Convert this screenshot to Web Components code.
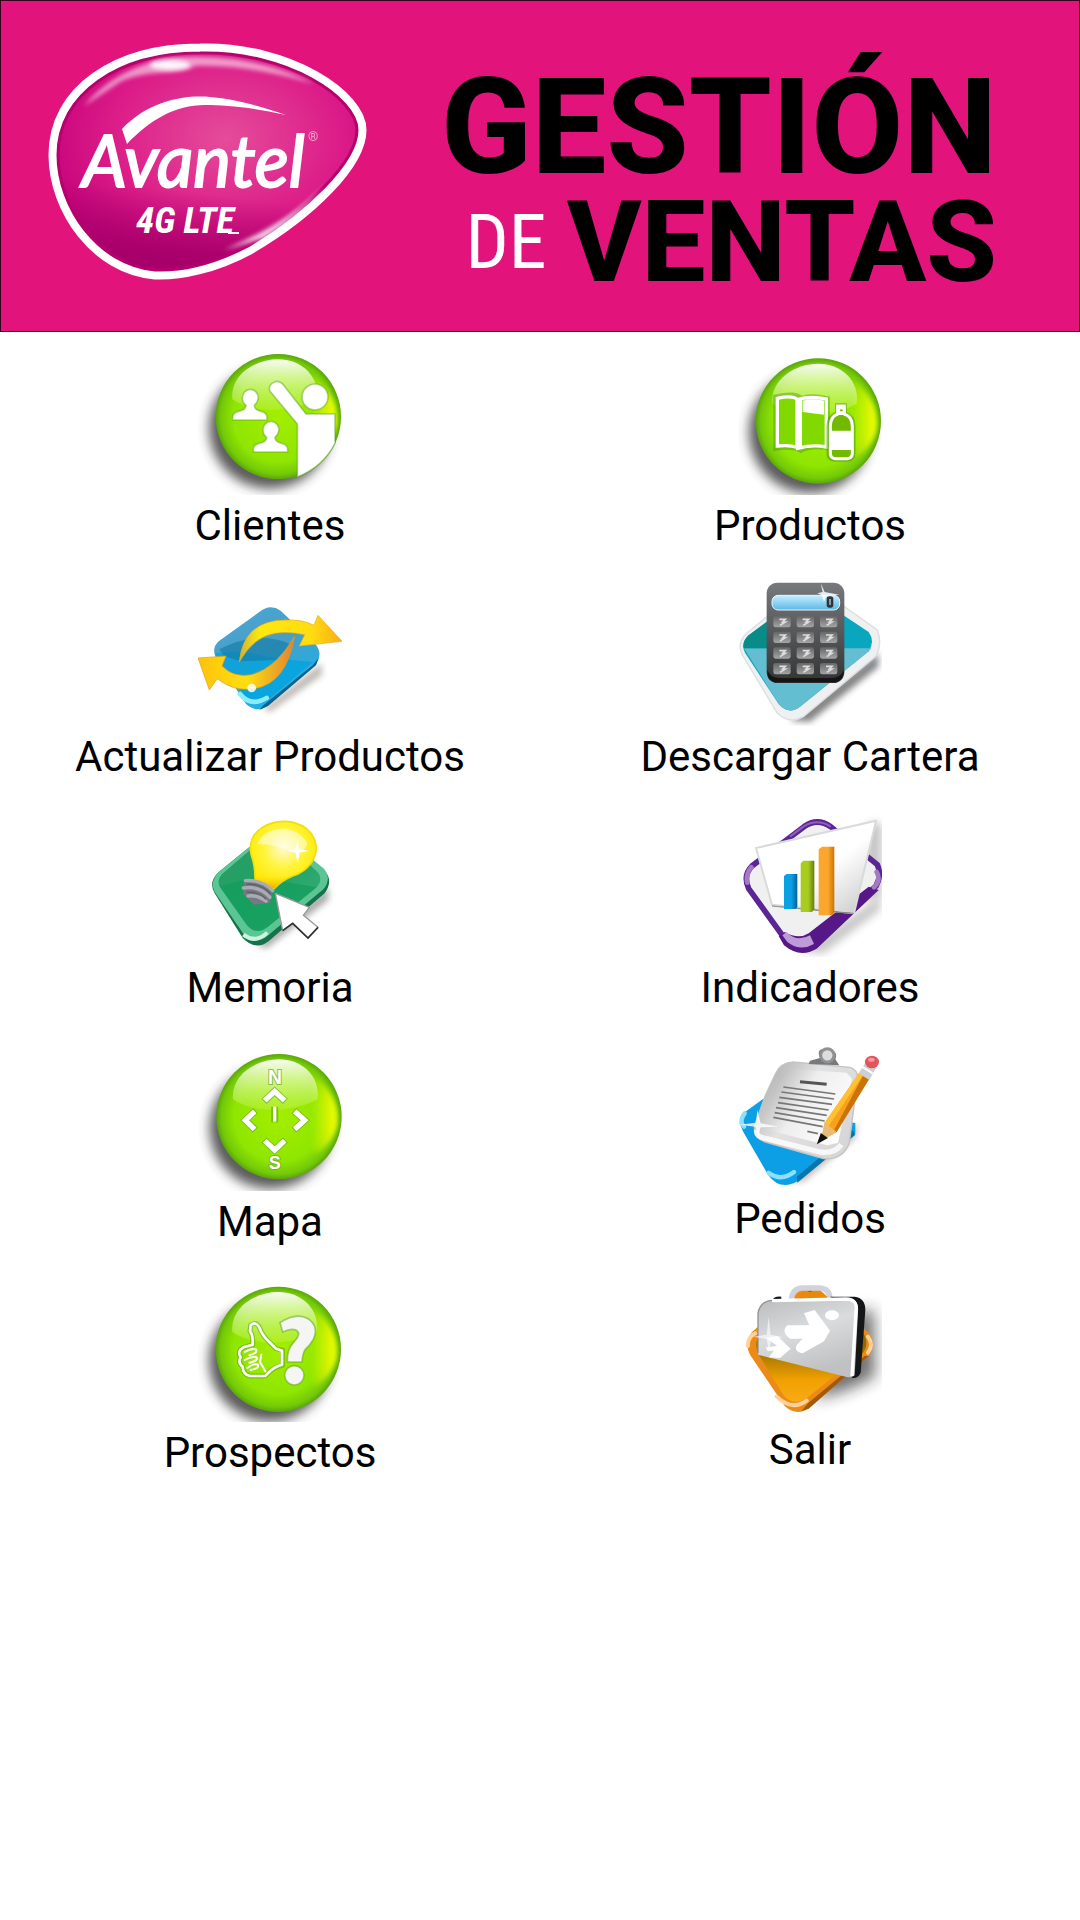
<!DOCTYPE html>
<html lang="es">
<head>
<meta charset="utf-8">
<meta name="viewport" content="width=device-width, initial-scale=1">
<title>Gestión de Ventas</title>
<style>
    body {
        margin: 0;
        background: #fff;
        color: #000;
        font-family: Roboto, "Liberation Sans", sans-serif;
    }
</style>
</head>
<body>

<app-header>
    <brand-logo slot="logo"></brand-logo>
    Gestión
    <span slot="small">de</span>
    <span slot="second">Ventas</span>
</app-header>

<main-menu>
    <menu-item icon="clientes">Clientes</menu-item>
    <menu-item icon="productos">Productos</menu-item>
    <menu-item icon="actualizar">Actualizar Productos</menu-item>
    <menu-item icon="cartera">Descargar Cartera</menu-item>
    <menu-item icon="memoria">Memoria</menu-item>
    <menu-item icon="indicadores">Indicadores</menu-item>
    <menu-item icon="mapa">Mapa</menu-item>
    <menu-item icon="pedidos">Pedidos</menu-item>
    <menu-item icon="prospectos">Prospectos</menu-item>
    <menu-item icon="salir">Salir</menu-item>
</main-menu>

<script>
// green glass ball shared by several icons
const ball = (cx, cy) => `
    <defs>
        <radialGradient id="ball" cx=".5" cy=".5" r=".5">
            <stop offset="0" stop-color="#a4ee00"/>
            <stop offset=".72" stop-color="#8fe600"/>
            <stop offset=".92" stop-color="#74c908"/>
            <stop offset="1" stop-color="#5aa50c"/>
        </radialGradient>
        <linearGradient id="shine" x1="0" y1="0" x2="0" y2="1">
            <stop offset="0" stop-color="#fff" stop-opacity=".95"/>
            <stop offset="1" stop-color="#d6f77a" stop-opacity=".25"/>
        </linearGradient>
        <linearGradient id="glow" x1="0" y1="0" x2="1" y2="0">
            <stop offset=".1" stop-color="#e6fa00" stop-opacity="0"/>
            <stop offset=".8" stop-color="#e6fa00"/>
        </linearGradient>
        <filter id="soft" x="-30%" y="-30%" width="160%" height="160%"><feGaussianBlur stdDeviation="17"/></filter>
        <filter id="edge" x="-30%" y="-30%" width="160%" height="160%"><feGaussianBlur stdDeviation="6"/></filter>
    </defs>
    <circle cx="${cx - 26}" cy="${cy + 34}" r="182" fill="#333" opacity=".8" filter="url(#soft)"/>
    <circle cx="${cx}" cy="${cy}" r="188" fill="url(#ball)"/>
    <path d="M${cx + 90} ${cy - 138}Q${cx + 190} ${cy - 60} ${cx + 174} ${cy + 30}Q${cx + 150} ${cy + 100} ${cx + 90} ${cy + 120}Z" fill="url(#glow)" filter="url(#edge)"/>
    <path d="M${cx - 138} ${cy - 52}C${cx - 145} ${cy - 125} ${cx - 70} ${cy - 172} ${cx} ${cy - 172}C${cx + 70} ${cy - 172} ${cx + 125} ${cy - 120} ${cx + 115} ${cy - 52}C${cx + 60} ${cy - 20} ${cx - 60} ${cy} ${cx - 138} ${cy - 52}Z" fill="url(#shine)"/>
`;

const bust = (x, y) => `<path d="M${x - 22} ${y - 16}a24 26 0 1 1 48 0q-2 14-12 22q0 14 20 18q18 4 18 18v8h-103v-8q0-14 18-18q22-4 22-18q-11-8-11-22Z"/>`;

const keys = () => {
    let out = '';
    for (let row = 0; row < 4; row++) {
        for (let col = 0; col < 3; col++) {
            const x = 220 + col * 70;
            const y = 138 + row * 47;
            out += `<rect x="${x}" y="${y}" width="52" height="34" rx="7" fill="url(#key)"/>`;
            out += `<path d="M${x + 18} ${y + 10}h18l-8 8h8l-16 10" fill="none" stroke="#ddd" stroke-width="5"/>`;
        }
    }
    return out;
};

const icons = {
    clientes: {
        box: '54 33 432 432',
        art: `${ball(295, 230)}
            <g fill="#fff" stroke="#579d16" stroke-opacity=".45" stroke-width="5">
                ${bust(209, 190)}
                ${bust(271, 286)}
                <circle cx="405" cy="171" r="39"/>
                <path d="M276 130q18-14 34 4L378 222H465V310Q430 380 352 411V252L270 154q-6-14 6-24Z"/>
            </g>`
    },
    productos: {
        box: '114 33 432 432',
        art: `${ball(355, 243)}
            <path d="M228 172q60-14 75 5q30-12 78 0v145q-45-8-78 8q-25-14-75-6Z" fill="none" stroke="#579d16" stroke-opacity=".5" stroke-width="17"/>
            <path d="M232 175q45-10 61 4v143q-25-8-61-4ZM293 179q35-12 86-2v144q-40-8-86 4Z" fill="#82d900" stroke="#fff" stroke-width="10"/>
            <path d="M286 175h20v150h-20ZM308 182q30-8 64 0v42l-64-8Z" fill="#fff"/>
            <path d="M414 198h18v24q26 8 26 36v82q0 16-16 17h-38q-16-1-16-17v-82q0-28 26-36Z" fill="#72b900" stroke="#579d16" stroke-opacity=".6" stroke-width="17"/>
            <path d="M413 198h20v24q24 8 24 36v82q0 14-14 16h-38q-14-2-14-16v-82q0-28 22-36Z" fill="#72b900" stroke="#fff" stroke-width="9"/>
            <path d="M393 272h60v58h-60ZM409 200h27v25h-27Z" fill="#fff"/>
            <path d="M420 211h8" stroke="#72b900" stroke-width="5"/>`
    },
    actualizar: {
        box: '54 36 432 432',
        art: `
            <defs>
                <linearGradient id="tile" x1="0" y1="0" x2=".6" y2="1"><stop offset="0" stop-color="#45aadd"/><stop offset=".5" stop-color="#4b9dc2"/><stop offset="1" stop-color="#17b3ee"/></linearGradient>
                <linearGradient id="up" x1="0" y1="0" x2="1" y2="0"><stop offset="0" stop-color="#c9b33a"/><stop offset=".2" stop-color="#ffe80e"/><stop offset=".7" stop-color="#ffdc12"/><stop offset="1" stop-color="#fbab11"/></linearGradient>
                <linearGradient id="down" x1="0" y1="0" x2="1" y2="0"><stop offset="0" stop-color="#ffc20c"/><stop offset=".5" stop-color="#ffdf10"/><stop offset="1" stop-color="#df8333"/></linearGradient>
                <filter id="soft" x="-30%" y="-30%" width="160%" height="160%"><feGaussianBlur stdDeviation="9"/></filter>
            </defs>
            <path d="M250 415L425 280L425 315L270 425Z" fill="#432" opacity=".35" filter="url(#soft)"/>
            <path d="M238 126Q270 100 302 122L406 222Q430 252 408 282L264 406Q232 432 198 402L110 268Q92 236 116 214Z" fill="url(#tile)"/>
            <path d="M416 264L408 286L264 408L238 420L250 406L398 286Z" fill="#08638f"/>
            <path d="M104 250Q180 240 224 252T398 276L260 394Q226 416 198 384Z" fill="#00a3df" opacity=".75"/>
            <path d="M118 238Q230 180 330 222L290 270L180 274L132 258Z" fill="#147ca8" opacity=".65"/>
            <path d="M180 372Q212 412 260 384" fill="none" stroke="#8bebff" stroke-width="14" stroke-linecap="round"/>
            <path d="M178 276Q190 150 318 150Q370 148 402 166L414 136L486 214L358 228L374 194Q324 184 286 190Q220 200 178 276Z" fill="url(#up)" stroke="#e8ab1c" stroke-width="2"/>
            <path d="M344 198Q320 340 224 356Q160 366 112 326L88 360L54 264L138 258L126 288Q160 324 214 314Q290 294 344 198Z" fill="url(#down)" stroke="#e39c1b" stroke-width="2"/>
            <circle cx="215" cy="354" r="13" fill="#fff" opacity=".85"/>`
    },
    cartera: {
        box: '114 36 432 432',
        art: `
            <defs>
                <linearGradient id="body" x1="0" y1="0" x2="0" y2="1"><stop offset="0" stop-color="#77797c"/><stop offset=".5" stop-color="#55575a"/><stop offset="1" stop-color="#333"/></linearGradient>
                <linearGradient id="key" x1="0" y1="0" x2="0" y2="1"><stop offset="0" stop-color="#666"/><stop offset="1" stop-color="#a5a5a5"/></linearGradient>
                <linearGradient id="screen" x1="0" y1="0" x2="0" y2="1"><stop offset="0" stop-color="#c9edff"/><stop offset="1" stop-color="#59b9e6"/></linearGradient>
                <filter id="soft" x="-30%" y="-30%" width="160%" height="160%"><feGaussianBlur stdDeviation="9"/></filter>
            </defs>
            <path d="M270 452L535 250V290L330 455Z" fill="#333" opacity=".6" filter="url(#soft)"/>
            <path d="M310 50Q335 40 360 58L532 180Q548 220 528 258L310 440Q270 464 232 430L128 256Q108 220 140 190Z" fill="#eef0f2" stroke="#dcdfe1" stroke-width="4"/>
            <path d="M310 78L340 76L506 186Q526 214 506 244L300 410Q266 436 236 402L136 250Q120 222 146 196Z" fill="#0aa6bd"/>
            <path d="M132 235H514L506 244L300 410Q266 436 236 402Z" fill="#62bed0"/>
            <path d="M220 140L146 196Q126 214 131 235H220Z" fill="#078c88"/>
            <rect x="200" y="38" width="233" height="301" rx="32" fill="url(#body)"/>
            <path d="M202 300Q200 337 232 337H400Q430 337 432 300Q420 324 396 324H236Q210 322 202 300Z" fill="#151515"/>
            <rect x="216" y="76" width="203" height="44" rx="18" fill="url(#screen)" stroke="#e6f7ff" stroke-width="3"/>
            <rect x="384" y="83" width="12" height="26" rx="4" fill="none" stroke="#333" stroke-width="8"/>
            <path d="M362 40L374 66L418 74L378 78L372 96L366 76L352 70L368 66Z" fill="#fff" opacity=".85"/>
            ${keys()}`
    },
    memoria: {
        box: '54 39 432 432',
        art: `
            <defs>
                <linearGradient id="tile" x1="0" y1="0" x2="1" y2="1"><stop offset="0" stop-color="#2a9a60"/><stop offset=".5" stop-color="#22a468"/><stop offset="1" stop-color="#3fae78"/></linearGradient>
                <radialGradient id="bulb" cx=".5" cy=".4" r=".6"><stop offset="0" stop-color="#fffbd0"/><stop offset=".5" stop-color="#fff43a"/><stop offset="1" stop-color="#ffe800"/></radialGradient>
                <linearGradient id="neck" x1="0" y1="0" x2="0" y2="1"><stop offset=".6" stop-color="#ffd400" stop-opacity="0"/><stop offset="1" stop-color="#f2a900"/></linearGradient>
                <filter id="soft" x="-30%" y="-30%" width="160%" height="160%"><feGaussianBlur stdDeviation="10"/></filter>
            </defs>
            <path d="M230 436L445 260V300L260 445Z" fill="#444" opacity=".45" filter="url(#soft)"/>
            <path d="M244 112Q280 90 320 114L432 210Q462 242 434 280L270 420Q230 456 188 414L104 280Q84 246 116 216Z" fill="#15724a"/>
            <path d="M244 112Q280 90 320 114L432 206Q456 236 430 268L262 408Q226 436 192 404L104 276Q88 246 116 216Z" fill="#5cc594"/>
            <path d="M246 120Q280 104 314 124L410 214Q432 236 410 262L264 380Q228 408 200 374L124 268Q106 244 126 222Z" fill="url(#tile)"/>
            <path d="M120 258L230 230L410 262L264 380Q228 408 200 374Z" fill="#0f9c5a" opacity=".65"/>
            <path d="M190 404Q226 432 262 398" fill="none" stroke="#c9f4df" stroke-width="12"/>
            <path d="M225 238Q226 200 214 166C196 88 280 52 342 68C406 86 424 144 394 188Q374 216 338 228Q304 242 282 266Z" fill="url(#bulb)" stroke="#f0df10" stroke-width="5"/>
            <path d="M225 238Q226 200 214 166H394Q374 216 338 228Q304 242 282 266Z" fill="url(#neck)"/>
            <path d="M232 132Q250 88 310 86Q360 90 382 130Q376 160 342 158Q290 132 232 132Z" fill="#fff" opacity=".5"/>
            <path d="M352 122L358 148L388 152L359 158L353 190L346 158L318 152L346 148Z" fill="#fff"/>
            <path d="M194 244Q242 244 278 272L270 308L222 314L190 282Z" fill="#777982"/>
            <path d="M196 242Q244 238 278 272M190 264Q238 256 270 292M204 288Q234 284 258 304" fill="none" stroke="#a9abb3" stroke-width="10" stroke-linecap="round"/>
            <path d="M199 253Q244 250 272 282M200 277Q238 274 258 298" fill="none" stroke="#5e6069" stroke-width="4"/>
            <path d="M286 280L308 392L338 370L384 414L414 382L370 346L388 322Z" fill="#fff" stroke="#999" stroke-width="4" stroke-linejoin="round"/>
            <path d="M308 392L338 370L384 414L414 382" fill="none" stroke="#333" stroke-width="5"/>`
    },
    indicadores: {
        box: '114 39 432 432',
        art: `
            <defs>
                <linearGradient id="paper" x1="0" y1="0" x2="1" y2="1"><stop offset=".55" stop-color="#fff"/><stop offset="1" stop-color="#c4c4c4"/></linearGradient>
                <linearGradient id="blue" x1="0" y1="0" x2="1" y2="0"><stop offset=".55" stop-color="#0b9fe3"/><stop offset="1" stop-color="#005f9d"/></linearGradient>
                <linearGradient id="green" x1="0" y1="0" x2="1" y2="0"><stop offset=".55" stop-color="#a9cc20"/><stop offset="1" stop-color="#627e0d"/></linearGradient>
                <linearGradient id="orange" x1="0" y1="0" x2="1" y2="0"><stop offset=".6" stop-color="#fba62c"/><stop offset="1" stop-color="#cd7207"/></linearGradient>
                <filter id="soft" x="-30%" y="-30%" width="160%" height="160%"><feGaussianBlur stdDeviation="12"/></filter>
            </defs>
            <path d="M300 455L540 290V330L370 460ZM500 70L545 70V290L490 300Z" fill="#444" opacity=".3" filter="url(#soft)"/>
            <path d="M312 80Q352 52 392 80L532 194Q546 226 528 258L340 430Q300 460 260 424L146 266Q128 226 156 198Z" fill="#f0f0f1" stroke="#5c2596" stroke-width="17"/>
            <path d="M270 110L310 80Q352 54 392 80" fill="none" stroke="#8a62b6" stroke-width="6"/>
            <path d="M536 270L350 446Q300 476 252 436L236 408L254 396Q296 420 326 400L506 260Z" fill="#561787"/>
            <path d="M247 406L262 426Q300 456 342 432L330 406Q290 428 260 396Z" fill="#bd9bd8"/>
            <path d="M142 248Q136 224 154 202M530 216Q544 240 522 262" fill="none" stroke="#a679c5" stroke-width="14" stroke-linecap="round"/>
            <path d="M168 144L528 62L462 340L216 314Z" fill="url(#paper)" stroke="#dadada" stroke-width="6" stroke-linejoin="round"/>
            <path d="M216 318L462 340L430 338Z" stroke="#888" stroke-width="2"/>
            <path d="M252 228L260 222H292V322L286 327H252Z" fill="url(#blue)"/>
            <path d="M302 190L310 182H343V328L336 336H302Z" fill="url(#green)"/>
            <path d="M356 148L366 140H403V338L396 346H356Z" fill="url(#orange)"/>`
    },
    mapa: {
        box: '54 42 432 441',
        height: 147,
        art: `${ball(297, 260)}
            <g fill="none" stroke-linecap="butt">
                <g stroke="#4e9411" stroke-opacity=".5" stroke-width="21">
                    <path d="M252 214L284 184L316 214M226 242L196 271L226 300M342 242L374 271L342 300M252 330L284 360L316 330M284 230V277"/>
                </g>
                <g stroke="#fff" stroke-width="16">
                    <path d="M254 212L284 184L314 212M224 244L196 271L224 298M344 244L374 271L344 298M254 332L284 360L314 332"/>
                    <path d="M284 230V275" stroke-width="10"/>
                </g>
            </g>
            <g fill="#fff" stroke="#6aa52c" stroke-opacity=".7" stroke-width="6" paint-order="stroke" font-family="Liberation Sans, sans-serif" font-weight="700" font-size="58" text-anchor="middle">
                <text x="285" y="162">N</text>
                <text x="284" y="418" font-size="54">S</text>
            </g>`
    },
    pedidos: {
        box: '114 42 432 432',
        art: `
            <defs>
                <linearGradient id="board" x1="0" y1=".2" x2="1" y2=".8"><stop offset="0" stop-color="#aaa"/><stop offset=".4" stop-color="#e2e2e2"/><stop offset="1" stop-color="#d5d5d5"/></linearGradient>
                <linearGradient id="page" x1="0" y1=".2" x2="1" y2=".7"><stop offset="0" stop-color="#aaa"/><stop offset=".45" stop-color="#eee"/><stop offset="1" stop-color="#fff"/></linearGradient>
                <filter id="soft" x="-30%" y="-30%" width="160%" height="160%"><feGaussianBlur stdDeviation="10"/></filter>
            </defs>
            <path d="M260 455L475 280L465 325L310 455Z" fill="#543" opacity=".35" filter="url(#soft)"/>
            <path d="M190 206L132 248Q112 276 130 306L204 434Q240 484 292 454L466 310V280Z" fill="#0c9fe6"/>
            <path d="M292 458L466 314L458 300L290 440Z" fill="#0875ad"/>
            <path d="M132 290Q116 276 134 250M206 428Q244 456 282 426" fill="none" stroke="#8bdfff" stroke-width="13" stroke-linecap="round"/>
            <path d="M226 132Q240 98 280 96L450 112Q478 122 472 152L448 338Q430 390 370 386L196 336Q158 322 164 286L196 196Z" fill="url(#board)" stroke="#c4c4c4" stroke-width="4"/>
            <path d="M170 300Q166 322 200 326L360 366Q404 372 424 344" fill="none" stroke="#fff" stroke-width="16" opacity=".8"/>
            <path d="M238 144L264 116L440 128L456 146L414 338L382 346L190 296L180 276Z" fill="url(#page)"/>
            <path d="M326 102L330 92L360 84Q346 52 384 58Q416 62 406 88L418 106Z" fill="#77797b"/>
            <circle cx="382" cy="76" r="20" fill="#ddd" stroke="#8f9193" stroke-width="9"/>
            <path d="M300 155L380 163" stroke="#555" stroke-width="9"/>
            <path d="M250 171L406 192M244 186L402 207M238 202L396 223M234 218L386 240M228 233L380 256M224 248L374 273M220 262L368 290M322 304L354 311" stroke="#777" stroke-width="5"/>
            <path d="M118 284L168 278L172 240L182 280L236 290L182 292L174 318L166 290Z" fill="#fff" opacity=".8"/>
            <path d="M478 128L508 146L410 306L362 334L374 278Z" fill="#f7a11d"/>
            <path d="M492 132L508 146L410 306L398 308Z" fill="#c9730a"/>
            <path d="M478 128L490 134L386 288L374 278Z" fill="#ffc12e"/>
            <path d="M374 278L410 306L362 334Z" fill="#eabb77"/>
            <path d="M364 314L378 324L356 336Z" fill="#111" stroke="#111" stroke-width="6"/>
            <path d="M496 98L528 114L508 150L476 130Z" fill="#ccd0d4"/>
            <path d="M486 110L518 130" stroke="#fff" stroke-width="6"/>
            <ellipse cx="516" cy="96" rx="21" ry="19" fill="#e2555c"/>
            <ellipse cx="514" cy="89" rx="10" ry="6" fill="#f49a9c"/>`
    },
    prospectos: {
        box: '144 15 432 441',
        height: 147,
        art: `${ball(385, 238)}
            <g fill="none" stroke-linejoin="round" stroke-linecap="round">
                <path d="M302 166Q316 152 328 172Q336 196 358 216L378 236L398 240V286L384 290Q362 298 346 318H300Q278 312 278 290Q262 278 272 262Q260 244 280 232L308 224Q310 196 300 184Z" stroke="#579d16" stroke-opacity=".5" stroke-width="15"/>
                <path d="M302 166Q316 152 328 172Q336 196 358 216L378 236L396 242V284L384 288Q362 298 346 318H300Q278 312 278 290Q262 278 272 262Q260 244 280 232L308 224Q310 196 300 184Z" stroke="#fff" stroke-width="8"/>
                <path d="M284 246Q302 234 318 238Q324 250 298 256M284 270Q304 258 320 262Q326 272 298 278M292 294Q310 280 324 284Q328 296 302 300M334 254L330 276L346 304" stroke="#fff" stroke-width="6"/>
            </g>
            <g fill="#f5f6f3" stroke="#579d16" stroke-opacity=".5" stroke-width="5">
                <path d="M390 158Q438 126 474 146Q508 170 490 208Q480 226 466 238Q458 250 456 276H412Q410 240 430 218Q446 202 446 190Q440 174 414 180L398 186Z"/>
                <circle cx="433" cy="316" r="29"/>
            </g>`
    },
    salir: {
        box: '114 15 432 432',
        art: `
            <defs>
                <linearGradient id="case" x1="0" y1="0" x2=".4" y2="1"><stop offset="0" stop-color="#b9bbbd"/><stop offset=".5" stop-color="#d9dbdc"/><stop offset="1" stop-color="#bfc1c3"/></linearGradient>
                <linearGradient id="tile" x1="0" y1="0" x2="0" y2="1"><stop offset=".5" stop-color="#8d6b00"/><stop offset=".8" stop-color="#f0a000"/><stop offset="1" stop-color="#f9ab16"/></linearGradient>
                <filter id="soft" x="-40%" y="-30%" width="180%" height="160%"><feGaussianBlur stdDeviation="22"/></filter>
            </defs>
            <path d="M480 120H520L525 320L440 360L340 390Z" fill="#222" opacity=".65" filter="url(#soft)"/>
            <path d="M300 60L360 60L508 190Q530 224 506 258L326 414Q290 440 254 408L150 254Q132 220 156 186Z" fill="#ec8a17"/>
            <path d="M330 60L492 192Q508 224 488 250L318 386Q282 408 252 378L176 254Q160 220 180 192Z" fill="url(#tile)"/>
            <path d="M506 258L326 416L304 424L324 400L494 258Z" fill="#a35a08"/>
            <path d="M144 228Q142 202 166 190M230 380Q276 424 320 392M504 200Q522 224 504 248" fill="none" stroke="#ffd29b" stroke-width="12" stroke-linecap="round"/>
            <path d="M274 90Q276 56 306 54H360Q390 56 390 88" fill="none" stroke="#cfd4dc" stroke-width="16"/>
            <path d="M296 84Q300 66 316 66H354Q370 68 370 84Z" fill="#e78a0b"/>
            <path d="M218 92Q220 78 244 80V92ZM390 80H464Q496 84 496 120L482 308Q474 326 456 324L460 130Z" fill="#151617"/>
            <path d="M174 130Q178 92 216 90L438 84Q478 84 474 124L464 316Q456 324 440 321L174 254Z" fill="url(#case)"/>
            <path d="M174 250V130Q180 94 216 91" fill="none" stroke="#929497" stroke-width="4"/>
            <path d="M216 92L438 87Q474 88 468 124L456 318" fill="none" stroke="#fff" stroke-width="10"/>
            <path d="M262 166H328L312 130L344 120L390 182L372 214L308 250Q278 244 292 222L308 206H270Q242 186 262 166ZM198 204L232 198L272 236L240 264L206 262L222 242H202L198 232L232 228Z" fill="#fff"/>
            <ellipse cx="396" cy="136" rx="21" ry="15" fill="#fff"/>
            <path d="M206 140L212 194L248 202L213 210L207 246L200 208L160 200L200 194Z" fill="#fff" opacity=".6"/>`
    }
};


class BrandLogo extends HTMLElement {
    constructor() {
        super();
        this.attachShadow({ mode: 'open' });
    }

    connectedCallback() {
        this.shadowRoot.innerHTML = `
        <style>
            :host {
                display: block;
            }

            svg {
                display: block;
                width: 332px;
                height: 268px;
            }

            .name {
                font: italic 400 71px Lato, sans-serif;
                stroke: #fff;
                stroke-width: 2px;
            }

            .net {
                font: italic 700 37px "Roboto Condensed", "Liberation Sans Narrow", "Liberation Sans", sans-serif;
            }
        </style>

        <svg viewBox="40 32 332 268" role="img" aria-label="Avantel 4G LTE">
            <defs>
                <radialGradient id="fill" cx=".56" cy=".4" r=".62">
                    <stop offset="0" stop-color="#e54c9a"/>
                    <stop offset=".6" stop-color="#dc1c88"/>
                    <stop offset="1" stop-color="#c4007a"/>
                </radialGradient>
                <linearGradient id="base" x1=".6" y1="0" x2=".45" y2="1">
                    <stop offset=".65" stop-color="#a8006b" stop-opacity="0"/>
                    <stop offset=".95" stop-color="#a8006b"/>
                </linearGradient>
                <filter id="blur" x="-20%" y="-60%" width="140%" height="220%"><feGaussianBlur stdDeviation="2"/></filter>
            </defs>
            <path d="M200 48C290 46 362 95 362 130C362 165 310 215 250 250C215 269 180 276 155 275C95 270 53 210 53 155C53 90 115 48 200 48Z" fill="url(#fill)" stroke="#fff" stroke-width="9"/>
            <path d="M200 53C287 51 357 98 357 130C357 162 306 211 248 246C213 264 180 271 155 270C98 265 58 207 58 155C58 94 118 53 200 53Z" fill="url(#base)" stroke="#b5006e" stroke-width="3"/>
            <path d="M84 106C108 76 150 57 185 57C235 55 280 66 314 84C280 74 235 64 195 66C180 76 150 68 120 82Z" fill="#fff" opacity=".55" filter="url(#blur)"/>
            <ellipse cx="170" cy="65" rx="20" ry="5" fill="#fff" opacity=".9" filter="url(#blur)"/>
            <path d="M224 250Q290 222 324 186Q300 216 264 238Z" fill="#fff" opacity=".85" filter="url(#blur)"/>
            <path d="M122 129C150 100 185 95 210 97C238 99 265 108 286 115C250 107 225 105 205 105C175 105 150 120 127 144Z" fill="#fff"/>
            <g fill="#fff">
                <text class="name" x="82" y="187">Avantel</text>
                <text x="308" y="141" font-size="13" opacity=".6">®</text>
                <text class="net" x="136" y="233">4G LTE</text>
                <path d="M228 232h11v2h-11Z"/>
            </g>
        </svg>
        `;
    }
}

window.customElements.define('brand-logo', BrandLogo);


class AppHeader extends HTMLElement {
    constructor() {
        super();
        this.attachShadow({ mode: 'open' });
    }

    connectedCallback() {
        this.shadowRoot.innerHTML = `
        <style>
            :host {
                display: block;
            }

            header {
                display: flex;
                align-items: center;
                justify-content: space-between;
                min-height: 330px;
                padding: 0 82px 0 39px;
                border: 1px solid #33041c;
                background: #e2147c;
            }

            h1 {
                display: flex;
                flex-direction: column;
                align-items: flex-end;
                margin: 0;
                padding-top: 38px;
                font-weight: 800;
                font-size: 133px;
                line-height: 115px;
                text-transform: uppercase;
            }

            .line {
                display: flex;
                align-items: center;
                gap: 20px;
                font-size: 114px;
            }

            .small {
                color: #fff;
                font-family: "Roboto Condensed", "Liberation Sans Narrow", Roboto, sans-serif;
                font-weight: 400;
                font-size: 76px;
            }
        </style>

        <header>
            <slot name="logo"></slot>
            <h1>
                <span><slot></slot></span>
                <span class="line">
                    <span class="small"><slot name="small"></slot></span>
                    <slot name="second"></slot>
                </span>
            </h1>
        </header>
        `;
    }
}

window.customElements.define('app-header', AppHeader);


class MainMenu extends HTMLElement {
    constructor() {
        super();
        this.attachShadow({ mode: 'open' });
    }

    connectedCallback() {
        this.shadowRoot.innerHTML = `
        <style>
            :host {
                display: block;
            }

            nav {
                display: grid;
                grid-template-columns: 1fr 1fr;
                grid-auto-rows: minmax(202px, auto);
                align-items: start;
                row-gap: 29px;
                padding: 19px 0;
            }
        </style>

        <nav aria-label="Menú principal"><slot></slot></nav>
        `;
    }
}

window.customElements.define('main-menu', MainMenu);


class MenuItem extends HTMLElement {
    constructor() {
        super();
        this.attachShadow({ mode: 'open' });
    }

    connectedCallback() {
        const icon = icons[this.getAttribute('icon')];

        this.shadowRoot.innerHTML = `
        <style>
            :host {
                display: flex;
                justify-content: center;
            }

            button {
                display: flex;
                flex-direction: column;
                align-items: center;
                gap: 6px;
                padding: 0;
                border: 0;
                background: none;
                color: inherit;
                font: inherit;
                font-size: 42px;
                line-height: 49px;
                cursor: pointer;
            }

            svg {
                display: block;
                width: 144px;
            }
        </style>

        <button type="button">
            <svg viewBox="${icon.box}" height="${icon.height || 144}" aria-hidden="true">${icon.art}</svg>
            <span><slot></slot></span>
        </button>
        `;
    }
}

window.customElements.define('menu-item', MenuItem);
</script>
</body>
</html>
